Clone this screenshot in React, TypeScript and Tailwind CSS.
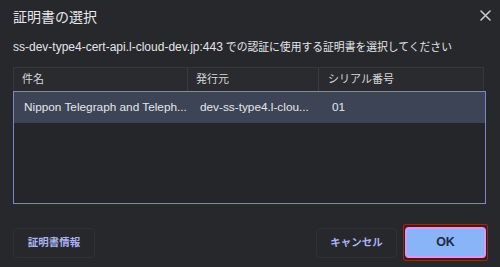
import React from "react";

type Cert = {
  name: string;
  issuer: string;
  serial: string;
};

const certs: Cert[] = [
  {
    name: "Nippon Telegraph and Teleph...",
    issuer: "dev-ss-type4.l-clou...",
    serial: "01",
  },
];

const font = {
  fontFamily: '"Liberation Sans", "Noto Sans CJK JP", sans-serif',
};

function CloseIcon() {
  return (
    <svg width="11" height="11" viewBox="0 0 11 11" className="block">
      <path
        d="M1 1 L10 10 M10 1 L1 10"
        stroke="#c8c9cc"
        strokeWidth="1.6"
        strokeLinecap="round"
      />
    </svg>
  );
}

function CertTable() {
  return (
    <div className="flex flex-col w-[473px]">
      <div className="flex h-[24px] w-[471px] border border-[#36373b] border-b-0 bg-[#2a2b2f] text-[11px] text-[#d6d7da] items-center">
        <div className="w-[174px] pl-[8px] border-r border-[#3a3b40] h-full flex items-center">
          件名
        </div>
        <div className="w-[131px] pl-[8px] border-r border-[#3a3b40] h-full flex items-center">
          発行元
        </div>
        <div className="flex-1 pl-[9px] h-full flex items-center">
          シリアル番号
        </div>
      </div>
      <div className="h-[113px] border border-[#7f86c6] bg-[#25262a]">
        {certs.map((c) => (
          <div
            key={c.serial}
            className="flex h-[31px] items-center bg-[#3c4455] text-[11.8px] text-[#e4e6ea]"
          >
            <div className="w-[174px] pl-[10px] whitespace-nowrap">{c.name}</div>
            <div className="w-[131px] pl-[12px] whitespace-nowrap">{c.issuer}</div>
            <div className="flex-1 pl-[13px]">{c.serial}</div>
          </div>
        ))}
      </div>
    </div>
  );
}

export default function App() {
  return (
    <div
      className="w-[500px] h-[267px] bg-[#27282c] flex flex-col pl-[13px] overflow-hidden"
      style={font}
    >
      <div className="flex justify-between items-start pt-[7px] pr-[9px] h-[36px]">
        <h1 className="text-[14px] leading-[20px] text-[#e6e7ea]">証明書の選択</h1>
        <div className="pt-[3px]">
          <CloseIcon />
        </div>
      </div>
      <p className="text-[12px] leading-[20px] text-[#e4e5e8] whitespace-nowrap h-[31px] pt-[1px]">
        ss-dev-type4-cert-api.l-cloud-dev.jp:443
        <span className="text-[10.8px]"> での認証に使用する証明書を選択してください</span>
      </p>
      <CertTable />
      <div className="flex items-center justify-between mt-[20px] pr-[12px]">
        <button className="w-[82px] h-[30px] rounded-[4px] border border-[#303136] text-[10.5px] font-bold text-[#a9b3ee]">
          証明書情報
        </button>
        <div className="flex items-center gap-[6px]">
          <button className="w-[81px] h-[30px] rounded-[4px] border border-[#303136] text-[10.5px] font-bold text-[#a9b3ee]">
            キャンセル
          </button>
          <div className="w-[85px] h-[37px] bg-[#4d1524] border border-[#7a3418] rounded-[2px] flex items-center justify-center">
            <button className="w-[81px] h-[31px] rounded-[4px] bg-[#8ab4f8] border-[2px] border-[#d39cf0] text-[12.5px] font-bold text-[#1d2a44]">
              OK
            </button>
          </div>
        </div>
      </div>
    </div>
  );
}
